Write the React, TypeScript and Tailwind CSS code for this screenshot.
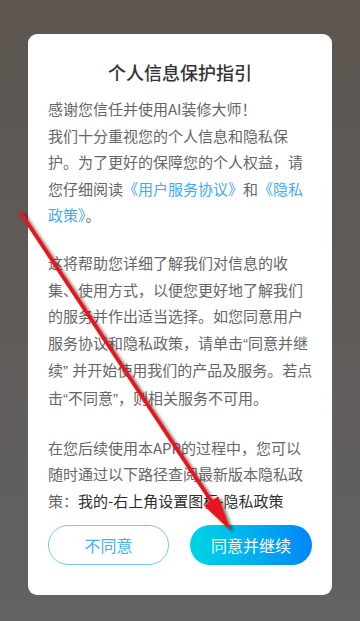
import React from "react";

const font = { fontFamily: '"Noto Sans CJK SC", "Noto Sans", sans-serif' };

// curly quotes drawn narrow, like the Latin ones in the screenshot
function Q({ children }: { children: React.ReactNode }) {
  return <span className="font-['Liberation_Sans',sans-serif]">{children}</span>;
}

function Arrow() {
  // red annotation arrow drawn on top of the dialog
  const x1 = 21;
  const y1 = 213;
  const tx = 231;
  const ty = 531;
  const dx = tx - x1;
  const dy = ty - y1;
  const len = Math.hypot(dx, dy);
  const ux = dx / len;
  const uy = dy / len;
  const head = 36;
  const half = 8.5;
  const bx = tx - ux * head;
  const by = ty - uy * head;
  const px = -uy * half;
  const py = ux * half;
  return (
    <svg className="absolute inset-0 pointer-events-none" width="360" height="621" viewBox="0 0 360 621">
      <defs>
        <filter id="sh" x="-20%" y="-20%" width="140%" height="140%">
          <feDropShadow dx="3" dy="2" stdDeviation="1.8" floodColor="#000" floodOpacity="0.5" />
        </filter>
      </defs>
      <g filter="url(#sh)">
        <line x1={x1} y1={y1} x2={bx + ux * 4} y2={by + uy * 4} stroke="#e8161a" strokeWidth="3.8" strokeLinecap="round" />
        <polygon points={`${tx},${ty} ${bx + px},${by + py} ${bx - px},${by - py}`} fill="#e8161a" />
      </g>
    </svg>
  );
}

export default function App() {
  return (
    <div
      className="relative w-[360px] h-[621px] overflow-hidden bg-gradient-to-b from-[#5c5550] to-[#626262] pt-[34px]"
      style={font}
    >
      <div className="mx-[28px] w-[304px] h-[561px] bg-white rounded-[9px] px-5 pt-[25px] pb-[30px] flex flex-col">
        <h1 className="text-center text-[18px] leading-[26px] font-medium text-[#333]">个人信息保护指引</h1>

        <div className="mt-[11px] text-[15px] leading-[26.6px] text-[#666] whitespace-nowrap">
          <p>
            感谢您信任并使用AI装修大师！
            <br />
            我们十分重视您的个人信息和隐私保
            <br />
            护。为了更好的保障您的个人权益，请
            <br />
            您仔细阅读<span className="text-[#42abf3]">《用户服务协议》</span>和<span className="text-[#42abf3]">《隐私</span>
            <br />
            <span className="text-[#42abf3]">政策》</span>。
          </p>

          <p className="mt-[21px]">
            这将帮助您详细了解我们对信息的收
            <br />
            集、使用方式，以便您更好地了解我们
            <br />
            的服务并作出适当选择。如您同意用户
            <br />
            服务协议和隐私政策，请单击<Q>“</Q>同意并继
            <br />
            续<Q>” </Q>并开始使用我们的产品及服务。若点
            <br />
            击<Q>“</Q>不同意<Q>”</Q>，则相关服务不可用。
          </p>

          <p className="mt-[22px]">
            在您后续使用本APP的过程中，您可以
            <br />
            随时通过以下路径查阅最新版本隐私政
            <br />
            策：<span className="text-[#2e2e2e]">我的-右上角设置图标-隐私政策</span>
          </p>
        </div>

        <div className="mt-auto flex items-center justify-between">
          <button className="w-[121px] h-[40px] rounded-full border border-[#76c6fa] bg-white text-[16px] text-[#45aef5]">
            不同意
          </button>
          <button className="w-[122px] h-[40px] rounded-full bg-gradient-to-r from-[#00d5e3] to-[#0786f6] text-[16px] text-white">
            同意并继续
          </button>
        </div>
      </div>

      <Arrow />
    </div>
  );
}
